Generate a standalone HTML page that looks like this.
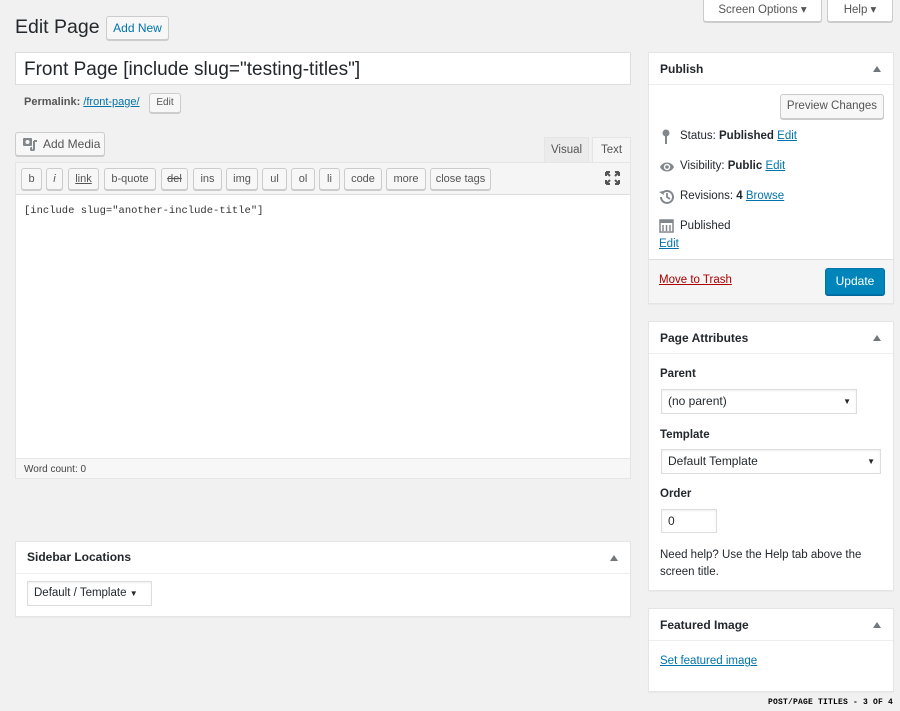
<!DOCTYPE html>
<html><head><meta charset="utf-8"><style>
*{box-sizing:border-box;margin:0;padding:0}
body{width:900px;height:711px;background:#f1f1f1;font-family:"Liberation Sans",sans-serif;font-size:11.5px;color:#23282d;position:relative;overflow:hidden}
.a{position:absolute}
.btn{position:absolute;background:#f7f7f7;border:1px solid #ccc;border-radius:3px;box-shadow:0 1px 0 #ccc;color:#555;font-size:11.5px;text-align:center;white-space:nowrap}
.box{position:absolute;background:#fff;border:1px solid #e5e5e5;box-shadow:0 1px 1px rgba(0,0,0,.04)}
.hd{position:absolute;left:0;right:0;top:0;border-bottom:1px solid #eee;font-weight:bold;font-size:12px;padding-left:11px}
.tri{position:absolute;right:12px;width:0;height:0;border-left:4px solid transparent;border-right:4px solid transparent;border-bottom:6px solid #72777c}
.lk{color:#0073aa;text-decoration:underline}
.sel{position:absolute;background:#fff;border:1px solid #ddd;box-shadow:inset 0 1px 2px rgba(0,0,0,.07);font-size:12px;padding-left:6px}
.tb{position:absolute;top:168px;height:22px;line-height:20px;background:#f7f7f7;border:1px solid #ccc;border-radius:3px;box-shadow:0 1px 0 #ccc;color:#555;font-size:11px;text-align:center}
</style></head><body>
<div class="btn" style="left:703px;top:-3px;width:119px;height:25px;line-height:25px;background:#fff;border-radius:0 0 3px 3px">Screen Options &#9662;</div>
<div class="btn" style="left:827px;top:-3px;width:66px;height:25px;line-height:25px;background:#fff;border-radius:0 0 3px 3px">Help &#9662;</div>

<div class="a" style="left:15px;top:16px;font-size:19.5px;color:#23282d">Edit Page</div>
<div class="btn" style="left:106px;top:16px;width:63px;height:24px;line-height:22px;color:#0073aa;font-size:12px;background:#f7f7f7">Add New</div>

<div class="a" style="left:15px;top:52px;width:616px;height:33px;background:#fff;border:1px solid #ddd;font-size:19px;padding:6px 0 0 8px">Front Page [include slug="testing-titles"]</div>
<div class="a" style="left:24px;top:96px;color:#555;font-size:11px"><b>Permalink:</b> <span class="lk">/front-page/</span></div>
<div class="btn" style="left:149px;top:93px;width:32px;height:20px;line-height:18px;font-size:10px">Edit</div>

<div class="btn" style="left:15px;top:132px;width:90px;height:24px;line-height:22px;font-size:12px;text-align:left;padding-left:27px">Add Media
<svg class="a" style="left:7px;top:4px" width="15" height="14" viewBox="0 0 15 14"><rect x="0" y="1" width="9" height="8" rx="1" fill="#82878c"/><circle cx="4.5" cy="5" r="2" fill="#f7f7f7"/><path d="M11 4v8M11 4h3M11 12a1.5 1.5 0 1 1-2-1.4" stroke="#82878c" stroke-width="2" fill="none"/></svg></div>

<div class="a" style="left:544px;top:137px;width:45px;height:26px;background:#ebebeb;border:1px solid #e5e5e5;border-bottom:0;color:#555;text-align:center;line-height:24px;font-size:11.5px">Visual</div>
<div class="a" style="left:592px;top:137px;width:39px;height:26px;background:#f5f5f5;border:1px solid #e5e5e5;border-bottom:0;color:#555;text-align:center;line-height:24px;font-size:11.5px">Text</div>

<div class="a" style="left:15px;top:162px;width:616px;height:317px;border:1px solid #e5e5e5;background:#fff"></div>
<div class="a" style="left:16px;top:163px;width:614px;height:32px;background:#f5f5f5;border-bottom:1px solid #ddd"></div>
<div class="tb" style="left:21px;width:21px">b</div>
<div class="tb" style="left:46px;width:17px;font-style:italic">i</div>
<div class="tb" style="left:68px;width:31px;text-decoration:underline">link</div>
<div class="tb" style="left:104px;width:52px">b-quote</div>
<div class="tb" style="left:161px;width:27px;text-decoration:line-through">del</div>
<div class="tb" style="left:193px;width:29px">ins</div>
<div class="tb" style="left:226px;width:32px">img</div>
<div class="tb" style="left:262px;width:25px">ul</div>
<div class="tb" style="left:291px;width:24px">ol</div>
<div class="tb" style="left:319px;width:21px">li</div>
<div class="tb" style="left:344px;width:38px">code</div>
<div class="tb" style="left:386px;width:40px">more</div>
<div class="tb" style="left:430px;width:61px">close tags</div>
<svg class="a" style="left:605px;top:171px" width="15" height="14" viewBox="0 0 15 14"><path d="M1 1l4 4M14 1l-4 4M1 13l4-4M14 13l-4-4M1 1h4M1 1v4M14 1h-4M14 1v4M1 13h4M1 13v-4M14 13h-4M14 13v-4" stroke="#555" stroke-width="2" fill="none"/></svg>
<div class="a" style="left:24px;top:205px;font-family:'Liberation Mono',monospace;font-size:10.5px;color:#333">[include slug="another-include-title"]</div>
<div class="a" style="left:16px;top:458px;width:614px;height:20px;background:#f7f7f7;border-top:1px solid #e5e5e5;font-size:10px;color:#444;padding:5px 0 0 8px">Word count: 0</div>

<div class="box" style="left:15px;top:541px;width:616px;height:76px">
<div class="hd" style="height:32px;line-height:31px">Sidebar Locations<div class="tri" style="top:13px"></div></div>
<div class="sel" style="left:11px;top:39px;width:125px;height:25px;line-height:23px;font-size:11.5px">Default / Template <span style="font-size:8px">&#9660;</span></div>
</div>

<div class="box" style="left:648px;top:52px;width:246px;height:252px">
<div class="hd" style="height:32px;line-height:32px">Publish<div class="tri" style="top:13px"></div></div>
<div class="btn" style="left:131px;top:41px;width:104px;height:25px;line-height:23px;font-size:11.5px">Preview Changes</div>
<svg class="a" style="left:13px;top:76px" width="8" height="16" viewBox="0 0 8 16"><circle cx="4" cy="4" r="3.5" fill="#82878c"/><rect x="3" y="6" width="2" height="9" fill="#82878c"/></svg>
<div class="a" style="left:31px;top:77px">Status: <b>Published</b> <span class="lk">Edit</span></div>
<svg class="a" style="left:10px;top:108px" width="16" height="12" viewBox="0 0 16 12"><path d="M1 6C4 0 12 0 15 6C12 12 4 12 1 6z" fill="#82878c"/><circle cx="8" cy="6" r="3.2" fill="#fff"/><circle cx="8" cy="6" r="1.8" fill="#82878c"/></svg>
<div class="a" style="left:31px;top:107px">Visibility: <b>Public</b> <span class="lk">Edit</span></div>
<svg class="a" style="left:10px;top:136px" width="16" height="16" viewBox="0 0 16 16"><path d="M3.5 4A6 6 0 1 1 2 8" stroke="#82878c" stroke-width="2" fill="none"/><path d="M0 3l4-1 1 4z" fill="#82878c"/><path d="M8 4v4l3 2" stroke="#82878c" stroke-width="1.8" fill="none"/></svg>
<div class="a" style="left:31px;top:137px">Revisions: <b>4</b> <span class="lk">Browse</span></div>
<svg class="a" style="left:10px;top:165px" width="15" height="15" viewBox="0 0 15 15"><rect x="1" y="2" width="13" height="12" fill="none" stroke="#82878c" stroke-width="1.5"/><rect x="1" y="2" width="13" height="3" fill="#82878c"/><path d="M4 7v6M7.5 7v6M11 7v6" stroke="#82878c" stroke-width="1.5"/></svg>
<div class="a" style="left:31px;top:167px">Published</div>
<div class="a lk" style="left:10px;top:185px">Edit</div>
<div class="a" style="left:0;right:0;top:206px;bottom:0;background:#f5f5f5;border-top:1px solid #ddd"></div>
<div class="a" style="left:10px;top:221px;color:#a00;text-decoration:underline">Move to Trash</div>
<div class="a" style="left:176px;top:215px;width:60px;height:27px;background:#0085ba;border:1px solid #0073aa;border-radius:3px;box-shadow:0 1px 0 #006799;color:#fff;text-align:center;line-height:25px;font-size:12px">Update</div>
</div>

<div class="box" style="left:648px;top:321px;width:246px;height:270px">
<div class="hd" style="height:32px;line-height:32px">Page Attributes<div class="tri" style="top:13px"></div></div>
<div class="a" style="left:11px;top:46px;font-weight:bold">Parent</div>
<div class="sel" style="left:12px;top:67px;width:196px;height:25px;line-height:23px">(no parent)<span class="a" style="right:5px;font-size:8px">&#9660;</span></div>
<div class="a" style="left:11px;top:107px;font-weight:bold">Template</div>
<div class="sel" style="left:12px;top:127px;width:220px;height:25px;line-height:23px">Default Template<span class="a" style="right:5px;font-size:8px">&#9660;</span></div>
<div class="a" style="left:11px;top:166px;font-weight:bold">Order</div>
<div class="sel" style="left:12px;top:187px;width:56px;height:24px;line-height:22px">0</div>
<div class="a" style="left:11px;top:225px;width:225px;line-height:17px">Need help? Use the Help tab above the screen title.</div>
</div>

<div class="box" style="left:648px;top:608px;width:246px;height:84px">
<div class="hd" style="height:32px;line-height:32px">Featured Image<div class="tri" style="top:13px"></div></div>
<div class="a lk" style="left:11px;top:46px">Set featured image</div>
</div>

<div class="a" style="left:768px;top:698px;font-family:'Liberation Mono',monospace;font-size:8px;font-weight:bold;letter-spacing:0.2px;color:#000">POST/PAGE TITLES - 3 OF 4</div>
</body></html>
